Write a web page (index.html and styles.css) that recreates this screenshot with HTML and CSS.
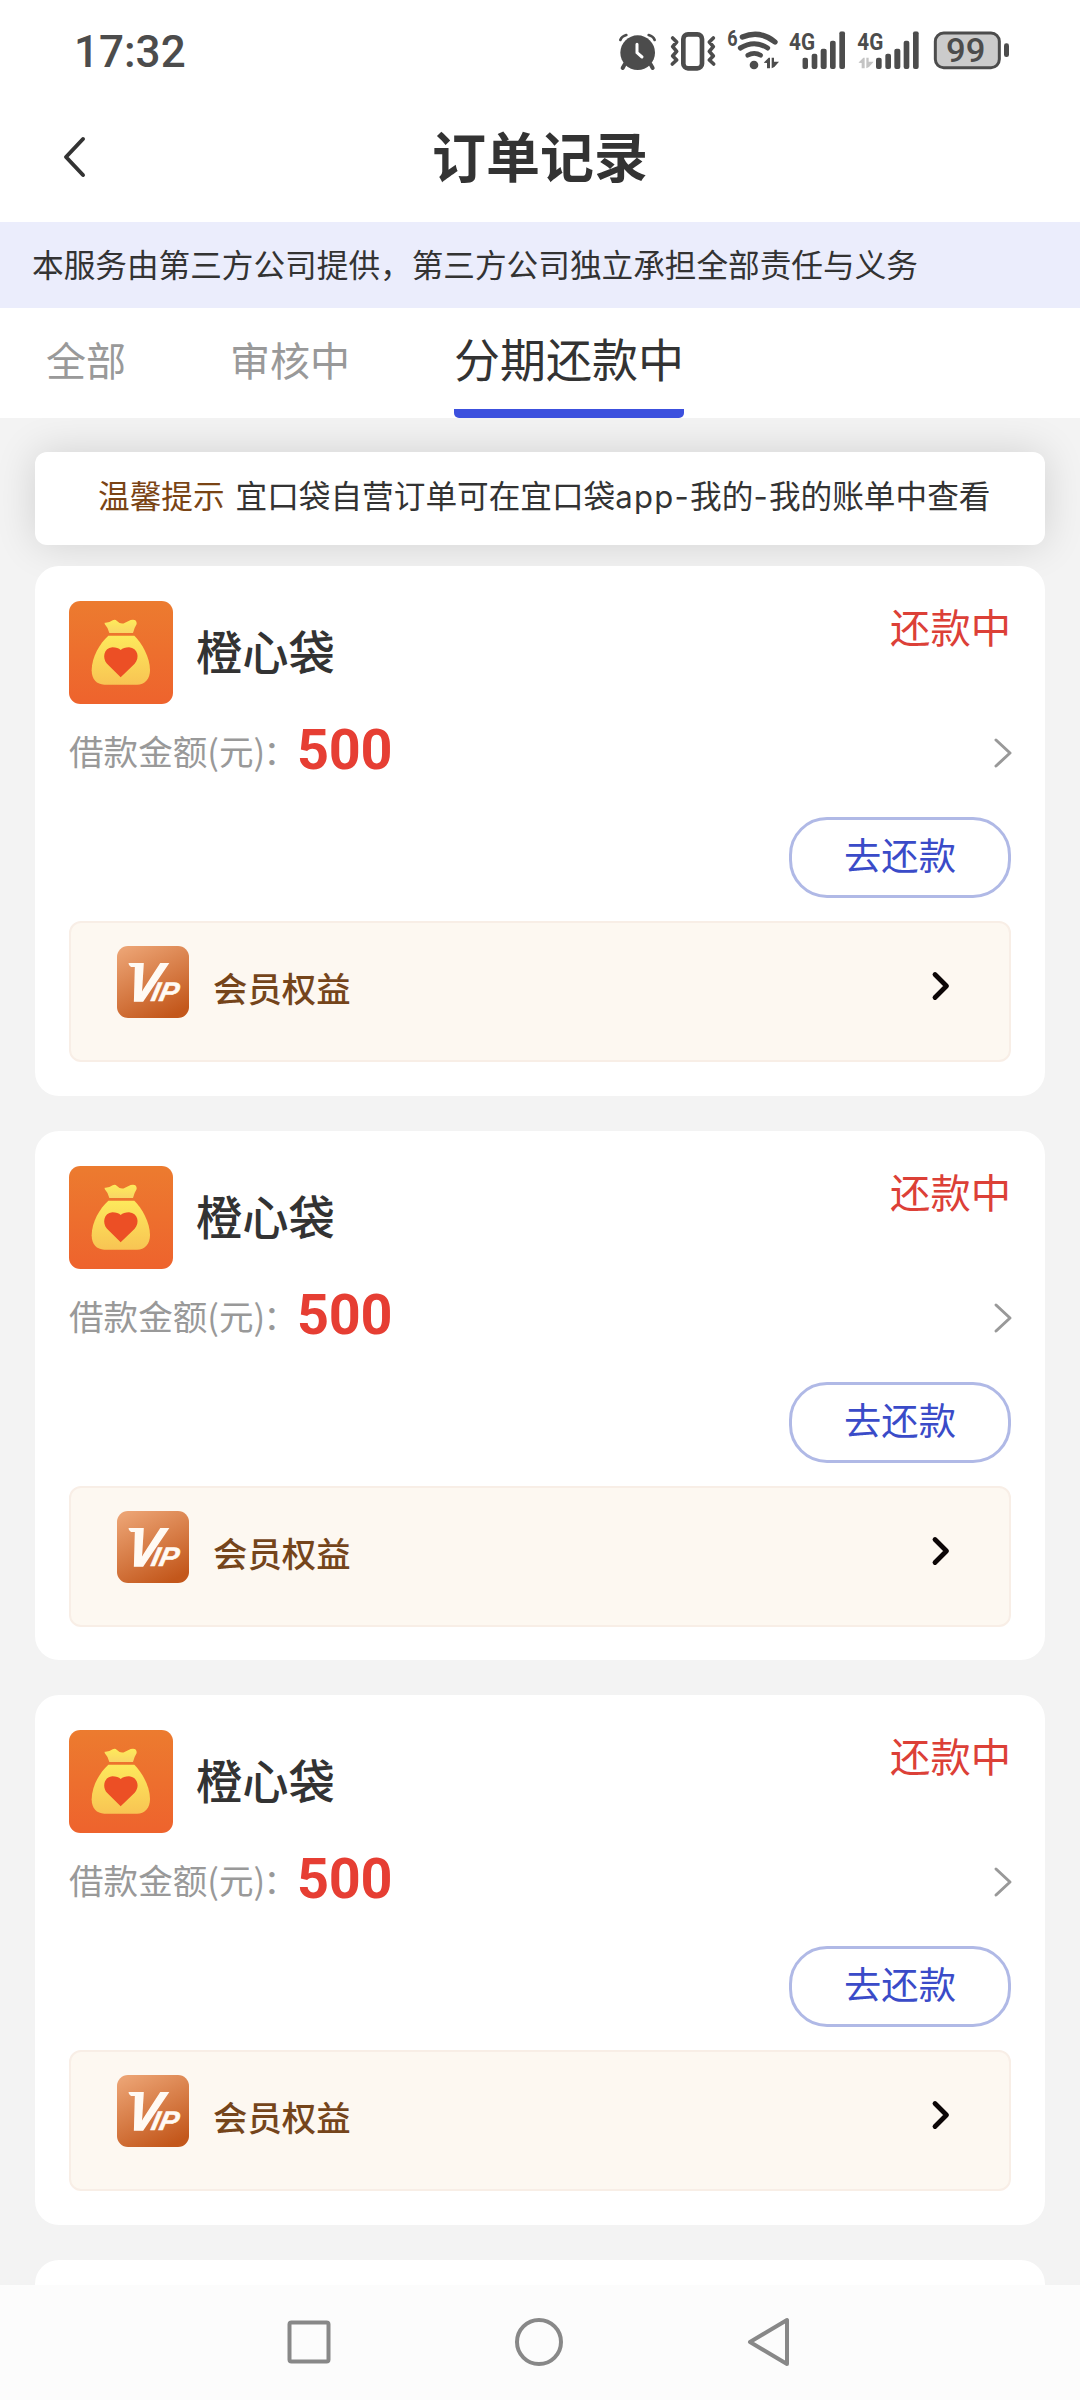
FILE: index.html
```html
<!DOCTYPE html>
<html lang="zh-CN">
<head>
<meta charset="utf-8">
<title>订单记录</title>
<link rel="stylesheet" href="styles.css">
</head>
<body>
<svg class="defs" width="0" height="0" aria-hidden="true">
  <defs>
    <linearGradient id="logo-bg" x1="0" y1="0" x2="0" y2="1"><stop offset="0" stop-color="#ec7b2f"/><stop offset="1" stop-color="#ee632d"/></linearGradient>
    <linearGradient id="logo-bag" x1="0" y1="0" x2="0" y2="1"><stop offset="0" stop-color="#fde95c"/><stop offset="1" stop-color="#f8c453"/></linearGradient>
    <linearGradient id="logo-tie" x1="0" y1="0" x2="0" y2="1"><stop offset="0" stop-color="#fdeb5a"/><stop offset="1" stop-color="#f9d565"/></linearGradient>
    <linearGradient id="vip-bg" x1="0.2" y1="0" x2="0.7" y2="1"><stop offset="0" stop-color="#eba272"/><stop offset="1" stop-color="#c3571b"/></linearGradient>
  </defs>
  <symbol id="logo" viewBox="0 0 312 309">
    <rect width="312" height="309" rx="34" fill="url(#logo-bg)"/>
    <path d="M107 65Q121 66 131 58Q138 54 144 60Q156 72 168 65L185 57Q204 53 203 69Q195 82 192 96H121Q118 81 107 69Z" fill="url(#logo-tie)"/>
    <path d="M118 104H196C218 125 243 169 243 207C243 235 227 251 204 251H106C83 251 68 235 68 208C68 169 92 127 118 104Z" fill="url(#logo-bag)"/>
    <path d="M155 229L114 188C99 172 104 141 130 139Q147 139 155 147Q164 139 180 139C207 141 213 171 197 188Z" fill="#ec4f25"/>
  </symbol>
  <symbol id="vip" viewBox="0 0 72 72">
    <rect width="72" height="72" rx="11" fill="url(#vip-bg)"/>
    <text class="vip-v" transform="translate(8 55) skewX(-10)" x="0" y="0" textLength="33" lengthAdjust="spacingAndGlyphs">V</text>
    <path d="M11.500 17H18V21H14L12 19Z" fill="#fffaf4"/>
    <text class="vip-ip" transform="translate(33 55) skewX(-12)" x="0" y="0" textLength="27" lengthAdjust="spacingAndGlyphs">IP</text>
  </symbol>
  <symbol id="bars" viewBox="0 0 130 114">
    <rect x="0" y="79" width="17" height="34" rx="6"/><rect x="28" y="67" width="17" height="46" rx="6"/><rect x="55" y="52" width="18" height="61" rx="6"/><rect x="83" y="28" width="17" height="85" rx="6"/><rect x="111" y="0" width="17" height="113" rx="6"/>
  </symbol>
  <symbol id="updown" viewBox="0 0 46 36">
    <path d="M0 17L15 2H19V34H10V18ZM24 2H31V14L46 14L32 30L24 34Z"/>
  </symbol>
</svg>

<div class="screen">
  <div class="status">
    <div class="clock">17:32</div>
    <div class="status-icons">
      <svg width="39" height="44" viewBox="54 55 117 132">
        <circle cx="113" cy="129" r="52"/>
        <path class="ln" d="M74 164L68 175M152 164L158 175" stroke-width="12"/>
        <path class="ln" d="M61 91Q65 80 79 76M164 91Q160 80 146 76" stroke-width="8"/>
        <path class="lw" d="M111 104V129L126 142" stroke-width="9"/>
      </svg>
      <svg width="46" height="44" viewBox="211 55 138 132">
        <rect class="ln" x="251" y="74" width="56" height="102" rx="14" stroke-width="14"/>
        <path class="ln" d="M219 85L231 97L219 111L231 125L219 139L231 151L218 163M341 85L329 97L341 111L329 125L341 139L329 151L342 163" stroke-width="11"/>
      </svg>
      <svg width="53" height="44" viewBox="381 55 159 132">
        <text class="st" x="382" y="109" font-size="66" textLength="31" lengthAdjust="spacingAndGlyphs">6</text>
        <path class="ln" d="M427 82Q480 60 525 97" stroke-width="16"/>
        <path class="ln" d="M421 115Q463 89 503 115" stroke-width="15"/>
        <path class="ln" d="M443 137Q463 125 482 137" stroke-width="14"/>
        <circle cx="462" cy="166" r="13"/>
        <use href="#updown" x="491" y="142" width="46" height="36"/>
      </svg>
      <svg width="57" height="44" viewBox="567 55 171 132">
        <text class="st" x="567" y="120" font-size="72" textLength="78" lengthAdjust="spacingAndGlyphs">4G</text>
        <use href="#bars" x="607" y="65" width="130" height="114"/>
      </svg>
      <svg width="62" height="44" viewBox="770 55 186 132">
        <text class="st" x="771" y="120" font-size="72" textLength="78" lengthAdjust="spacingAndGlyphs">4G</text>
        <use class="dim" href="#updown" x="774" y="142" width="46" height="36"/>
        <use href="#bars" x="827" y="65" width="130" height="114"/>
      </svg>
      <svg width="77" height="44" viewBox="999 55 231 132">
        <rect x="1006" y="70" width="192" height="104" rx="25" fill="#cbcbcb" stroke="#4c4c4c" stroke-width="9"/>
        <rect x="1212" y="101" width="15" height="41" rx="7"/>
        <text class="st thin" x="1038" y="158" font-size="101" textLength="118" lengthAdjust="spacingAndGlyphs">99</text>
      </svg>
    </div>
  </div>

  <header class="titlebar">
    <svg class="back" width="24" height="44" viewBox="0 0 24 44"><path d="M21 4L4 22L21 40"/></svg>
    <h1>订单记录</h1>
  </header>

  <div class="notice">本服务由第三方公司提供，第三方公司独立承担全部责任与义务</div>

  <nav class="tabs">
    <div class="tab">全部</div>
    <div class="tab">审核中</div>
    <div class="tab active">分期还款中</div>
  </nav>

  <main class="content">
    <div class="tip"><b>温馨提示</b><span>宜口袋自营订单可在宜口袋<i>app-</i>我的<i>-</i>我的账单中查看</span></div>

    <div class="orders">
      <section class="card">
        <div class="head"><svg class="logo"><use href="#logo"/></svg><h2>橙心袋</h2><span class="state">还款中</span></div>
        <div class="amount"><span class="label">借款金额(元)<i>：</i></span><strong>500</strong><svg class="more" width="20" height="32" viewBox="0 0 20 32"><path d="M3 3L17 16L3 29"/></svg></div>
        <div class="actions"><button class="repay">去还款</button></div>
        <div class="perks"><svg class="vip"><use href="#vip"/></svg><span>会员权益</span><svg class="go" width="20" height="32" viewBox="0 0 20 32"><path d="M4 4.500L15.500 16L4 27.500"/></svg></div>
      </section>
      <section class="card">
        <div class="head"><svg class="logo"><use href="#logo"/></svg><h2>橙心袋</h2><span class="state">还款中</span></div>
        <div class="amount"><span class="label">借款金额(元)<i>：</i></span><strong>500</strong><svg class="more" width="20" height="32" viewBox="0 0 20 32"><path d="M3 3L17 16L3 29"/></svg></div>
        <div class="actions"><button class="repay">去还款</button></div>
        <div class="perks"><svg class="vip"><use href="#vip"/></svg><span>会员权益</span><svg class="go" width="20" height="32" viewBox="0 0 20 32"><path d="M4 4.500L15.500 16L4 27.500"/></svg></div>
      </section>
      <section class="card">
        <div class="head"><svg class="logo"><use href="#logo"/></svg><h2>橙心袋</h2><span class="state">还款中</span></div>
        <div class="amount"><span class="label">借款金额(元)<i>：</i></span><strong>500</strong><svg class="more" width="20" height="32" viewBox="0 0 20 32"><path d="M3 3L17 16L3 29"/></svg></div>
        <div class="actions"><button class="repay">去还款</button></div>
        <div class="perks"><svg class="vip"><use href="#vip"/></svg><span>会员权益</span><svg class="go" width="20" height="32" viewBox="0 0 20 32"><path d="M4 4.500L15.500 16L4 27.500"/></svg></div>
      </section>
      <section class="card"></section>
    </div>
  </main>

  <footer class="sysnav">
    <svg width="48" height="52" viewBox="0 0 48 52"><rect x="4.500" y="6.500" width="39" height="39" rx="2"/></svg>
    <svg width="52" height="52" viewBox="0 0 52 52"><circle cx="26" cy="26" r="22"/></svg>
    <svg width="48" height="52" viewBox="0 0 48 52"><path d="M5 26L42 4V48Z"/></svg>
  </footer>
</div>
</body>
</html>
```
FILE: styles.css
```css
* { box-sizing: border-box; margin: 0; padding: 0; }

body {
  width: 1080px;
  height: 2400px;
  overflow: hidden;
  background: #f3f3f3;
  color: #333;
  font-family: "Noto Sans CJK SC", sans-serif;
}

svg { display: block; flex: none; overflow: visible; }
.defs { position: absolute; }

.screen { display: flex; flex-direction: column; height: 2400px; }

/* Status bar */
.status {
  display: flex;
  justify-content: space-between;
  height: 100px;
  padding: 28px 70px 0 74px;
  background: #fff;
  color: #4c4c4c;
}
.clock {
  font: 500 44px/48px Roboto, sans-serif;
}
.status-icons { display: flex; fill: #4c4c4c; }
.status-icons svg:nth-child(2) { margin-left: 13px; }
.status-icons svg:nth-child(3) { margin-left: 11px; }
.status-icons svg:nth-child(4) { margin-left: 9px; }
.status-icons svg:nth-child(5) { margin-left: 11px; }
.status-icons svg:nth-child(6) { margin-left: 14px; }
.ln, .lw { fill: none; stroke: #4c4c4c; stroke-linecap: round; stroke-linejoin: round; }
.lw { stroke: #fff; }
.st { font-family: Roboto, sans-serif; font-weight: 700; }
.thin { font-weight: 500; }
.dim { fill: #c4c4c4; }

/* Title */
.titlebar {
  display: grid;
  grid-template-columns: 86px 1fr 86px;
  align-items: start;
  height: 122px;
  background: #fff;
}
.back { margin: 35px 0 0 62px; fill: none; stroke: #333; stroke-width: 4; stroke-linecap: round; stroke-linejoin: round; }
.titlebar h1 { margin-top: 15px; text-align: center; font-size: 54px; line-height: 80px; font-weight: 700; }

.notice {
  height: 86px;
  padding-left: 32px;
  background: #ebedfc;
  font-size: 31.65px;
  line-height: 83px;
  white-space: nowrap;
}

/* Tabs */
.tabs { display: flex; gap: 104px; height: 110px; padding-left: 46px; background: #fff; }
.tab { font-size: 40px; line-height: 103px; color: #999; }
.tab.active {
  height: 110px;
  border-bottom: 9px solid transparent;
  background: linear-gradient(#3c50de, #3c50de) bottom / 100% 9px no-repeat border-box;
  border-radius: 5px;
  font-size: 46px;
  line-height: 98px;
  color: #333;
}

/* List */
.content { flex: 1; min-height: 0; overflow: hidden; padding: 34px 35px 0; }
.tip {
  display: flex;
  gap: 11px;
  height: 93px;
  padding-left: 63px;
  border-radius: 12px;
  background: #fff;
  box-shadow: 0 0 42px rgba(0, 0, 0, 0.14);
  font-size: 31.65px;
  line-height: 85px;
  white-space: nowrap;
}
.tip b { font-weight: 400; color: #7a4414; }
.tip i { font-family: Inter, sans-serif; font-style: normal; font-size: 31px; letter-spacing: 1.3px; }

.orders { position: relative; display: flex; flex-direction: column; gap: 35px; margin-top: 21px; }
.card {
  flex: none;
  height: 529.67px;
  padding: 35px 34px 0;
  border-radius: 24px;
  background: #fff;
}
.head { display: flex; height: 103px; }
.logo { width: 104px; height: 103px; }
.head h2 { margin-left: 23px; font-size: 46.3px; line-height: 98px; font-weight: 500; }
.state { margin: -3px 0 0 auto; font-size: 40.3px; line-height: 56px; color: #dc4037; }

.amount { display: flex; align-items: center; height: 96px; }
.label { width: 228px; font-size: 34.6px; line-height: 92px; height: 96px; color: #999; white-space: nowrap; }
.label i { margin-left: -2px; font-style: normal; }
.amount strong { font: 700 55.800px/90px Roboto, sans-serif; height: 94px; letter-spacing: -0.3px; color: #e63e33; }
.more { margin: 2px -2px 0 auto; fill: none; stroke: #999; stroke-width: 3; stroke-linecap: round; stroke-linejoin: round; }

.actions { display: flex; justify-content: flex-end; margin-top: 17px; }
.repay {
  width: 222px;
  height: 81px;
  padding-bottom: 7px;
  border: 3px solid #b0b9e6;
  border-radius: 38px;
  background: #fff;
  color: #3a4bc8;
  font: 400 37.300px/68px "Noto Sans CJK SC", sans-serif;
}

.perks {
  display: flex;
  height: 141px;
  margin-top: 23px;
  padding: 23px 58px 0 46px;
  border: 2px solid #f8eee6;
  border-radius: 12px;
  background: #fdf8f1;
}
.vip { width: 72px; height: 72px; }
.perks span { margin: 11px 0 0 24px; font-size: 34.4px; line-height: 60px; height: 60px; font-weight: 500; color: #75451b; }
.go { margin: 24px 0 0 auto; fill: none; stroke: #0c0606; stroke-width: 4.800; stroke-linecap: round; stroke-linejoin: round; }
.vip-v, .vip-ip { fill: #fffaf4; stroke: #fffaf4; font-family: "Liberation Sans", sans-serif; font-weight: 700; font-style: italic; }
.vip-v { font-size: 54px; stroke-width: 1.5; }
.vip-ip { font-size: 27px; stroke-width: 0.5; }

/* System navigation */
.sysnav {
  display: flex;
  justify-content: space-between;
  height: 115px;
  padding: 31px 287px 0 285px;
  background: #fcfcfc;
  fill: none;
  stroke: #888;
  stroke-width: 4;
  stroke-linejoin: round;
}
```
